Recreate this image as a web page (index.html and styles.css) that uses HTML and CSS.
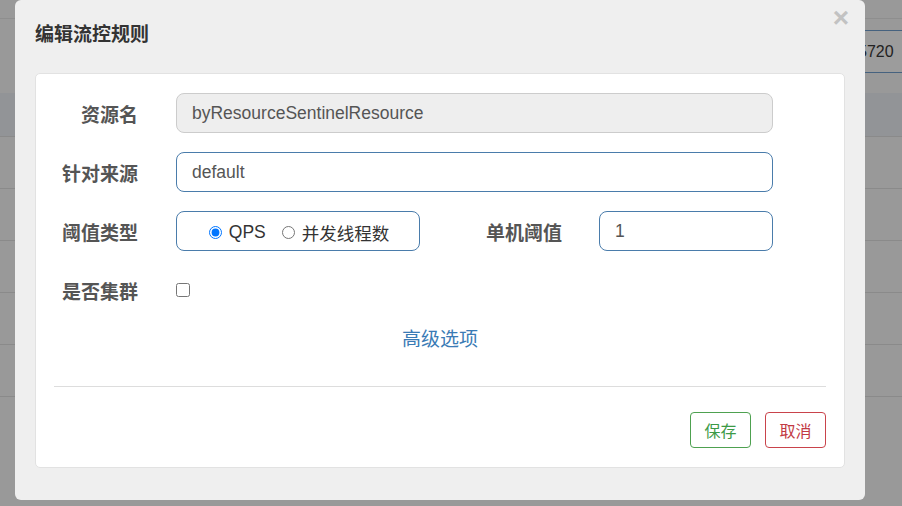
FILE: index.html
```html
<!DOCTYPE html>
<html lang="zh-CN">
<head>
  <meta charset="UTF-8">
  <meta name="viewport" content="width=device-width, initial-scale=1.0">
  <title>编辑流控规则</title>
  <link rel="stylesheet" href="styles.css">
</head>
<body>
  <div class="page">
    <div class="topbar"></div>
    <div class="toolbar">
      <input class="search" type="text" value="5720">
    </div>
    <div class="table-head"></div>
    <div class="table-row"></div>
    <div class="table-row"></div>
    <div class="table-row"></div>
    <div class="table-row"></div>
    <div class="table-row"></div>
  </div>

  <div class="modal">
    <div class="modal-header">
      <h4>编辑流控规则</h4>
      <span class="close-button">&times;</span>
    </div>
    <div class="modal-body">
      <div class="card">
        <div class="form">
          <div class="form-row">
            <label class="form-label">资源名</label>
            <input class="field wide" type="text" value="byResourceSentinelResource" disabled>
          </div>
          <div class="form-row">
            <label class="form-label">针对来源</label>
            <input class="field wide active" type="text" value="default">
          </div>
          <div class="form-row">
            <label class="form-label">阈值类型</label>
            <div class="radio-group">
              <label class="radio"><input type="radio" name="grade" checked> QPS</label>
              <label class="radio cjk"><input type="radio" name="grade"> 并发线程数</label>
            </div>
            <label class="form-label second">单机阈值</label>
            <input class="field small active" type="text" value="1">
          </div>
          <div class="form-row">
            <label class="form-label">是否集群</label>
            <input class="check" type="checkbox">
          </div>
        </div>
        <div class="advanced"><a href="#">高级选项</a></div>
        <hr class="divider">
        <div class="footer">
          <button class="btn btn-save">保存</button>
          <button class="btn btn-cancel">取消</button>
        </div>
      </div>
    </div>
  </div>
</body>
</html>
```

FILE: styles.css
```css
body {
  margin: 0;
  padding: 0;
  background-color: #999999;
  font-family: "Liberation Sans", "Noto Sans CJK SC", sans-serif;
  overflow: hidden;
  height: 506px;
}

/* page behind the backdrop */
.page {
  width: 902px;
  overflow: hidden;
}

.topbar {
  height: 18px;
  border-bottom: 1px solid #8e8e8e;
}

.toolbar {
  height: 74px;
  display: flex;
  align-items: flex-start;
  padding-left: 845px;
}

.search {
  width: 120px;
  height: 43px;
  box-sizing: border-box;
  margin-top: 11px;
  padding: 0 0 0 12px;
  border: 1px solid #46627f;
  border-radius: 4px;
  background: #9c9c9c;
  color: #222;
  font-family: "Liberation Sans", sans-serif;
  font-size: 16px;
  flex-shrink: 0;
}

.table-head {
  height: 43px;
  background-color: #929497;
  border-bottom: 1px solid #8a8a8a;
}

.table-row {
  height: 51px;
  border-bottom: 1px solid #8a8a8a;
}

/* modal */
.modal {
  position: fixed;
  top: 0;
  left: 15px;
  width: 850px;
  height: 500px;
  background: #efefef;
  border-radius: 6px;
}

.modal-header {
  height: 73px;
  display: flex;
  justify-content: space-between;
  align-items: flex-start;
  padding: 0 16px 0 20px;
}

.modal-header h4 {
  margin: 20px 0 0;
  font-family: "Noto Sans CJK SC", sans-serif;
  font-size: 19px;
  line-height: 26px;
  font-weight: bold;
  color: #333;
}

.close-button {
  margin-top: 4px;
  font-family: "Liberation Sans", sans-serif;
  font-size: 28px;
  line-height: 28px;
  font-weight: bold;
  color: #c2c2c2;
}

.modal-body {
  padding: 0 20px 32px;
}

.card {
  background: #fff;
  border: 1px solid #e2e2e2;
  border-radius: 5px;
  padding: 19px 18px 19px;
}

.form {
  display: flex;
  flex-direction: column;
  gap: 19px;
}

.form-row {
  display: flex;
  align-items: center;
  height: 40px;
}

.form-label {
  width: 84px;
  margin-right: 38px;
  text-align: right;
  font-family: "Noto Sans CJK SC", sans-serif;
  font-size: 19px;
  font-weight: bold;
  color: #555;
  white-space: nowrap;
  flex-shrink: 0;
}

.form-label.second {
  width: 142px;
  margin-right: 37px;
}

.field {
  height: 40px;
  box-sizing: border-box;
  padding: 0 15px;
  border: 1px solid #cccccc;
  border-radius: 8px;
  background: #fff;
  font-family: "Liberation Sans", sans-serif;
  font-size: 17.5px;
  color: #555;
  outline: none;
}

.field.wide {
  width: 597px;
}

.field.small {
  width: 174px;
}

.field:disabled {
  background: #eeeeee;
  color: #555;
}

.field.active {
  border-color: #4a7cab;
}

.radio-group {
  width: 244px;
  height: 40px;
  box-sizing: border-box;
  border: 1px solid #4a7cab;
  border-radius: 8px;
  display: flex;
  align-items: center;
  justify-content: center;
  gap: 16px;
  padding: 2px 0 0 2px;
}

.radio {
  display: flex;
  align-items: center;
  font-size: 17.5px;
  color: #333;
}

.radio.cjk {
  font-family: "Noto Sans CJK SC", sans-serif;
}

.radio input {
  margin: 0 7px 0 0;
  width: 13px;
  height: 13px;
}

.check {
  margin: 0;
  width: 14px;
  height: 14px;
}

.advanced {
  text-align: center;
  margin-top: 15px;
  height: 26px;
  line-height: 26px;
}

.advanced a {
  display: inline-block;
  line-height: 26px;
  font-family: "Noto Sans CJK SC", sans-serif;
  font-size: 19px;
  color: #3a7bb5;
  text-decoration: none;
}

.divider {
  border: 0;
  border-top: 1px solid #dddddd;
  margin: 35px 0 25px;
}

.footer {
  display: flex;
  justify-content: flex-end;
  gap: 14px;
}

.btn {
  height: 36px;
  width: 61px;
  padding: 0;
  background: #fff;
  border-radius: 4px;
  font-family: "Noto Sans CJK SC", sans-serif;
  font-size: 16px;
  cursor: pointer;
}

.btn-save {
  border: 1px solid #4ea150;
  color: #3d9a46;
}

.btn-cancel {
  border: 1px solid #c9434b;
  color: #c23a44;
}
```
